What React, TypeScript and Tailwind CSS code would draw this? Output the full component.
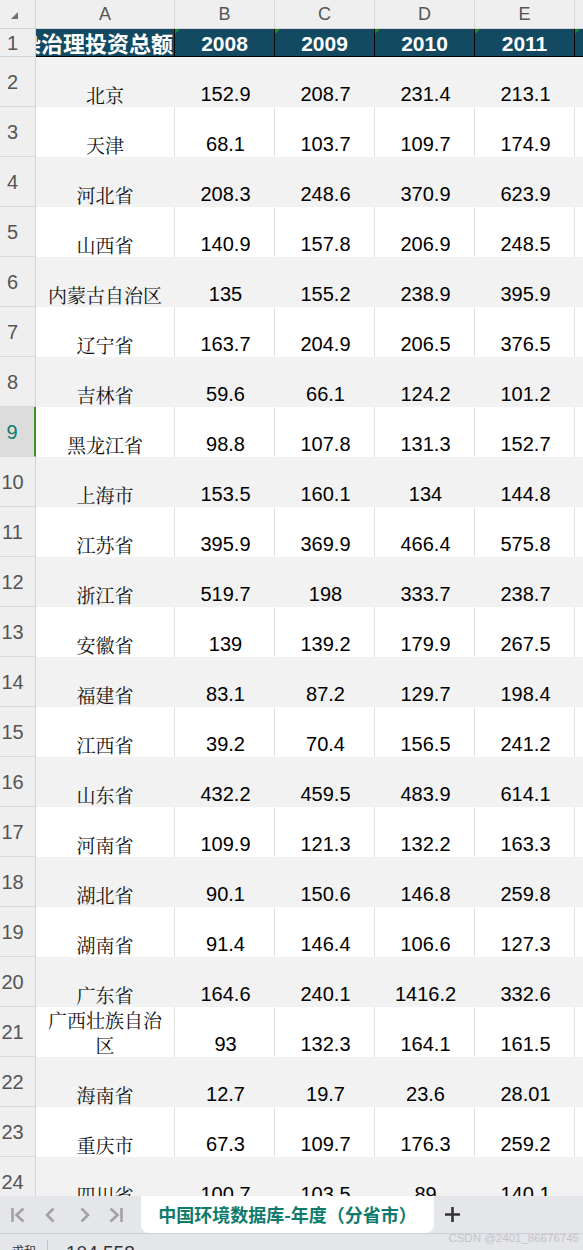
import React from "react";

const rows: string[][] = [
  ["北京", "152.9", "208.7", "231.4", "213.1"],
  ["天津", "68.1", "103.7", "109.7", "174.9"],
  ["河北省", "208.3", "248.6", "370.9", "623.9"],
  ["山西省", "140.9", "157.8", "206.9", "248.5"],
  ["内蒙古自治区", "135", "155.2", "238.9", "395.9"],
  ["辽宁省", "163.7", "204.9", "206.5", "376.5"],
  ["吉林省", "59.6", "66.1", "124.2", "101.2"],
  ["黑龙江省", "98.8", "107.8", "131.3", "152.7"],
  ["上海市", "153.5", "160.1", "134", "144.8"],
  ["江苏省", "395.9", "369.9", "466.4", "575.8"],
  ["浙江省", "519.7", "198", "333.7", "238.7"],
  ["安徽省", "139", "139.2", "179.9", "267.5"],
  ["福建省", "83.1", "87.2", "129.7", "198.4"],
  ["江西省", "39.2", "70.4", "156.5", "241.2"],
  ["山东省", "432.2", "459.5", "483.9", "614.1"],
  ["河南省", "109.9", "121.3", "132.2", "163.3"],
  ["湖北省", "90.1", "150.6", "146.8", "259.8"],
  ["湖南省", "91.4", "146.4", "106.6", "127.3"],
  ["广东省", "164.6", "240.1", "1416.2", "332.6"],
  ["广西壮族自治区", "93", "132.3", "164.1", "161.5"],
  ["海南省", "12.7", "19.7", "23.6", "28.01"],
  ["重庆市", "67.3", "109.7", "176.3", "259.2"],
  ["四川省", "100.7", "103.5", "89", "140.1"],
];

const sans = "font-['Liberation_Sans',Arial,sans-serif]";
const cjk = "font-['Noto_Serif_CJK_SC','Noto_Sans_CJK_SC',serif]";

function Tri() {
  return (
    <span className="absolute left-0 top-0 h-0 w-0 border-t-[5px] border-r-[5px] border-t-[#1d8a2c] border-r-transparent" />
  );
}

export default function App() {
  return (
    <div className={`relative flex h-[1250px] w-[583px] flex-col overflow-hidden bg-white ${sans}`}>
      {/* sheet */}
      <div className="h-[1196px] shrink-0 overflow-hidden">
        {/* column header */}
        <div className="flex h-[29px] border-b border-[#d4d4d4] bg-[#efefef] text-[18px] leading-[28px] text-[#555]">
          <div className="relative w-[36px] shrink-0 border-r border-[#d4d4d4]">
            <span className="absolute left-[11px] top-[12px] h-0 w-0 border-b-[7px] border-l-[7px] border-b-[#707070] border-l-transparent" />
          </div>
          <div className="w-[139px] shrink-0 border-r border-[#d9d9d9] text-center">A</div>
          {["B", "C", "D", "E"].map((c) => (
            <div key={c} className="w-[100px] shrink-0 border-r border-[#d9d9d9] text-center">
              {c}
            </div>
          ))}
          <div className="flex-1" />
        </div>
        {/* row 1 */}
        <div className="flex h-[28px]">
          <div className="w-[36px] shrink-0 border-b border-r border-[#d4d4d4] bg-[#efefef] pr-[10px] text-center text-[20px] leading-[28px] text-[#555]">
            1
          </div>
          <div className="flex flex-1 border-b border-black bg-[#134a62] text-[21px] font-bold leading-[27px] text-white">
            <div className="flex w-[139px] shrink-0 justify-end overflow-hidden whitespace-nowrap border-r border-black pr-[1px]">
              <span className="font-['Noto_Sans_CJK_SC',sans-serif] text-[22px] font-bold leading-[27px]">环境污染治理投资总额</span>
            </div>
            {["2008", "2009", "2010", "2011"].map((y) => (
              <div key={y} className="relative w-[100px] shrink-0 border-r border-black pt-[1px] text-center">
                <Tri />
                {y}
              </div>
            ))}
            <div className="relative flex-1">
              <Tri />
            </div>
          </div>
        </div>
        {/* data rows */}
        {rows.map((r, i) => {
          const n = i + 2;
          const band = n % 2 === 0;
          const sel = n === 9;
          const line = band ? "border-transparent" : "border-[#e1e1e1]";
          const wrap = r[0].length > 6;
          return (
            <div key={n} className={`flex h-[50px] ${band ? "bg-[#f2f2f2]" : "bg-white"}`}>
              <div
                className={`flex w-[36px] shrink-0 items-center justify-center border-b border-[#d9d9d9] pr-[10px] pt-[1px] text-[20px] ${
                  sel
                    ? "border-r-2 border-r-[#3f8f2a] bg-[#dcdcdc] text-[#0f7b6c]"
                    : "border-r border-r-[#d4d4d4] bg-[#efefef] text-[#555]"
                }`}
              >
                {n}
              </div>
              <div
                className={`flex w-[139px] shrink-0 items-end justify-center border-r ${line} pb-[0px] text-center text-[19px] leading-[25px] text-[#111] ${cjk}`}
              >
                {wrap ? (
                  <span className="px-[8px]">{r[0]}</span>
                ) : (
                  <span>{r[0]}</span>
                )}
              </div>
              {r.slice(1).map((v, j) => (
                <div
                  key={j}
                  className={`flex w-[100px] shrink-0 items-end justify-center border-r ${line} pb-[1px] pl-[2px] text-[20px] leading-[24px] text-black`}
                >
                  {v}
                </div>
              ))}
              <div className="flex-1" />
            </div>
          );
        })}
      </div>
      {/* tab bar */}
      <div className="flex h-[37px] shrink-0 items-stretch bg-[#e5e6ea]">
        <div className="flex w-[141px] shrink-0 items-center text-[#a3a3a3]">
          <svg className="ml-[11px]" width="14" height="16" viewBox="0 0 14 16" fill="none" stroke="currentColor" strokeWidth="2.6">
            <path d="M1.5 1v14" />
            <path d="M12.5 1.5 L5.5 8 L12.5 14.5" />
          </svg>
          <svg className="ml-[20px]" width="10" height="16" viewBox="0 0 10 16" fill="none" stroke="currentColor" strokeWidth="2.6">
            <path d="M8.5 1.5 L2 8 L8.5 14.5" />
          </svg>
          <svg className="ml-[25px]" width="10" height="16" viewBox="0 0 10 16" fill="none" stroke="currentColor" strokeWidth="2.6">
            <path d="M1.5 1.5 L8 8 L1.5 14.5" />
          </svg>
          <svg className="ml-[19px]" width="14" height="16" viewBox="0 0 14 16" fill="none" stroke="currentColor" strokeWidth="2.6">
            <path d="M1.5 1.5 L8.5 8 L1.5 14.5" />
            <path d="M12.5 1v14" />
          </svg>
        </div>
        <div className="flex w-[293px] shrink-0 items-center justify-center rounded-b-[8px] bg-white">
          <span className="font-['Noto_Sans_CJK_SC',sans-serif] text-[18px] font-bold text-[#0f7b6c]">
            中国环境数据库-年度（分省市）
          </span>
        </div>
        <div className="flex items-center pl-[11px] text-[#333]">
          <svg width="15" height="15" viewBox="0 0 15 15" stroke="currentColor" strokeWidth="2.6">
            <path d="M7.5 0v15M0 7.5h15" />
          </svg>
        </div>
      </div>
      {/* status bar */}
      <div className="relative flex h-[17px] shrink-0 items-start overflow-hidden border-t border-[#cfd0d4] bg-[#e5e6ea]">
        <span className="ml-[12px] mt-[9px] font-['Noto_Sans_CJK_SC',sans-serif] text-[12px] leading-[16px] text-[#333]">求和</span>
        <span className="ml-[11px] mt-[6px] h-[14px] w-px bg-[#c4c4c4]" />
        <span className="ml-[18px] mt-[8px] text-[19px] leading-[22px] text-[#333]">104,558</span>
        <span className="absolute right-[4px] top-[-3px] font-['Liberation_Sans',sans-serif] text-[11.5px] leading-[14px] text-[#c3c4c8]">
          CSDN @2401_86676745
        </span>
      </div>
    </div>
  );
}
